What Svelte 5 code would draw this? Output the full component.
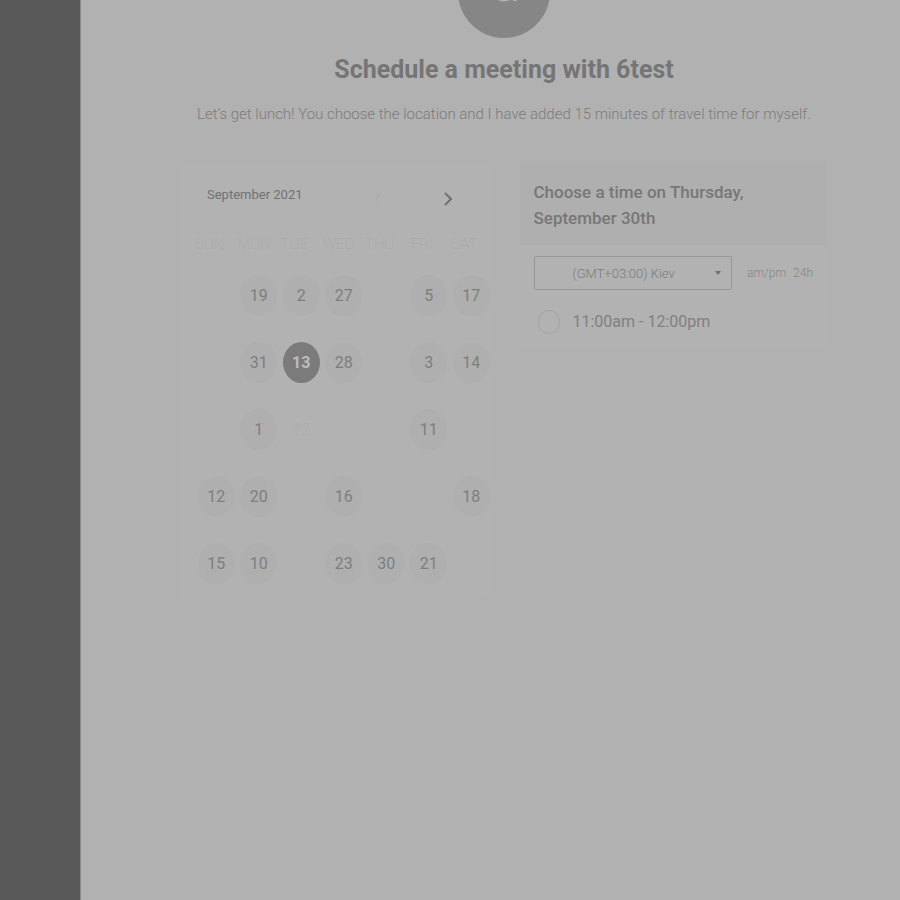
<script>
  const weekdays = ['SUN', 'MON', 'TUE', 'WED', 'THU', 'FRI', 'SAT'];
  const days = [
    [null, 19, 2, 27, null, 5, 17],
    [null, 31, 13, 28, null, 3, 14],
    [null, 1, 12, null, null, 11, null],
    [12, 20, null, 16, null, null, 18],
    [15, 10, null, 23, 30, 21, null]
  ];
  let selected = $state(13);
  let slot = $state('');
</script>

<div class="page">
  <aside class="rail"></aside>
  <main>
    <header>
      <svg class="avatar" viewBox="0 0 92 92" aria-hidden="true">
        <circle cx="46" cy="46" r="46" fill="#868686" />
        <path d="M40 53Q46 56 52 53M55 54h4" fill="none" stroke="#b0b0b0" stroke-width="2" />
      </svg>
      <h1>Schedule a meeting with 6test</h1>
      <p>Let’s get lunch! You choose the location and I have added 15 minutes of travel time for myself.</p>
    </header>

    <div class="panels">
      <section class="card calendar">
        <div class="month">
          <h2>September 2021</h2>
          <button class="prev" aria-label="Previous month">
            <svg width="10" height="14" viewBox="0 0 10 14"><path d="M7 2 3 7l4 5" /></svg>
          </button>
          <button class="next" aria-label="Next month">
            <svg width="10" height="14" viewBox="0 0 10 14"><path d="m2 1 6 6-6 6" /></svg>
          </button>
        </div>
        <table>
          <thead>
            <tr>{#each weekdays as name}<th scope="col">{name}</th>{/each}</tr>
          </thead>
          <tbody>
            {#each days as week, row}
              <tr>
                {#each week as day}
                  <td>
                    {#if row === 2 && day === 12}
                      <span class="faint">{day}</span>
                    {:else if day}
                      <button class="day" class:selected={day === selected} onclick={() => (selected = day)}>{day}</button>
                    {/if}
                  </td>
                {/each}
              </tr>
            {/each}
          </tbody>
        </table>
      </section>

      <section class="card times">
        <h2>Choose a time on Thursday, September 30th</h2>
        <div class="zone">
          <div class="picker">
            <select aria-label="Time zone">
              <option>(GMT+03:00) Kiev</option>
            </select>
            <svg width="6" height="4" viewBox="0 0 6 4" aria-hidden="true"><path d="M0 0h6L3 4z" /></svg>
          </div>
          <div class="format">
            <button>am/pm</button>
            <button>24h</button>
          </div>
        </div>
        <label class="slot">
          <input type="radio" name="slot" value="11" bind:group={slot} />
          <span>11:00am - 12:00pm</span>
        </label>
      </section>
    </div>
  </main>
</div>

<style>
  :global(body) {
    background: #b1b1b1;
  }
  .page {
    display: flex;
    min-height: 100vh;
    overflow: hidden;
    font-family: Roboto, 'Liberation Sans', sans-serif;
    color: #7c7c7c;
  }
  .rail {
    flex: none;
    width: 80px;
    background: #595959;
    border-right: 1px solid #888;
  }
  main {
    flex: 1;
    min-width: 0;
    padding: 0 73px 0 100px;
  }
  button,
  select {
    font: inherit;
    color: inherit;
    background: none;
    border: 0;
    padding: 0;
  }
  header {
    display: flex;
    flex-direction: column;
    align-items: center;
    text-align: center;
  }
  .avatar {
    width: 92px;
    height: 92px;
    margin-top: -54px;
  }
  h1 {
    margin: 16px 0 0;
    font-size: 25px;
    line-height: 32px;
    font-weight: 700;
    color: #757575;
  }
  header p {
    margin: 16px 0 0;
    font-size: 15px;
    line-height: 24px;
    font-weight: 300;
    white-space: nowrap;
  }
  .panels {
    display: grid;
    grid-template-columns: 1fr 1fr;
    gap: 31px;
    align-items: start;
    margin-top: 36px;
  }
  .card {
    background: #b2b2b2;
    border-radius: 6px;
  }
  .calendar {
    padding: 0 0 2px 14px;
  }
  .month {
    display: flex;
    align-items: center;
    height: 66px;
    padding: 0 36px 4px 12px;
  }
  .month h2 {
    flex: 1;
    margin: 0;
    font-size: 13px;
    line-height: 20px;
    font-weight: 400;
    color: #717171;
  }
  .month button {
    display: flex;
    margin-top: 8px;
  }
  .month .prev {
    margin-right: 60px;
  }
  .month path {
    fill: none;
    stroke: #a8a8a8;
  }
  .month .next path {
    stroke: #707070;
    stroke-width: 2;
  }
  table {
    width: calc(100% + 4px);
    table-layout: fixed;
    border-collapse: collapse;
  }
  th {
    height: 24px;
    padding: 0 14px 0 0;
    font-size: 15px;
    font-weight: 100;
    color: #a5a5a5;
  }
  td {
    height: 67px;
    padding: 0;
    text-align: center;
    font-size: 16px;
  }
  thead::after {
    content: '';
    display: block;
    height: 6px;
  }
  .day {
    width: 37px;
    height: 41px;
    border-radius: 50%;
    background: #afafaf;
    color: #7e7e7e;
  }
  .day.selected {
    background: #7b7b7b;
    color: #bdbdbd;
    font-weight: 700;
  }
  .faint {
    font-weight: 100;
    color: #a8a8a8;
  }
  .times {
    padding-bottom: 14px;
  }
  .times h2 {
    margin: 0;
    padding: 17px 60px 14px 14px;
    background: #afafaf;
    font-size: 17px;
    line-height: 26px;
    font-weight: 500;
    color: #777;
  }
  .zone {
    display: flex;
    align-items: center;
    justify-content: space-between;
    gap: 12px;
    padding: 11px 14px 0;
    font-weight: 300;
    font-size: 13px;
  }
  .picker {
    flex: 1;
    display: grid;
    align-items: center;
    max-width: 198px;
  }
  .picker select {
    grid-area: 1 / 1;
    width: 100%;
    height: 34px;
    padding-left: 38px;
    appearance: none;
    border: 1px solid #979797;
    border-radius: 2px;
  }
  .picker svg {
    grid-area: 1 / 1;
    justify-self: end;
    margin-right: 11px;
    fill: #707070;
    pointer-events: none;
  }
  .format {
    display: flex;
    gap: 7px;
    font-size: 12px;
    color: #858585;
  }
  .slot {
    display: flex;
    align-items: center;
    gap: 13px;
    margin-top: 20px;
    padding: 0 18px;
    font-size: 16px;
    line-height: 24px;
    color: #808080;
  }
  .slot input {
    appearance: none;
    width: 22px;
    height: 24px;
    margin: 0;
    border: 1px solid #a4a4a4;
    border-radius: 50%;
  }
  .slot input:checked {
    background: #7b7b7b;
  }
</style>
